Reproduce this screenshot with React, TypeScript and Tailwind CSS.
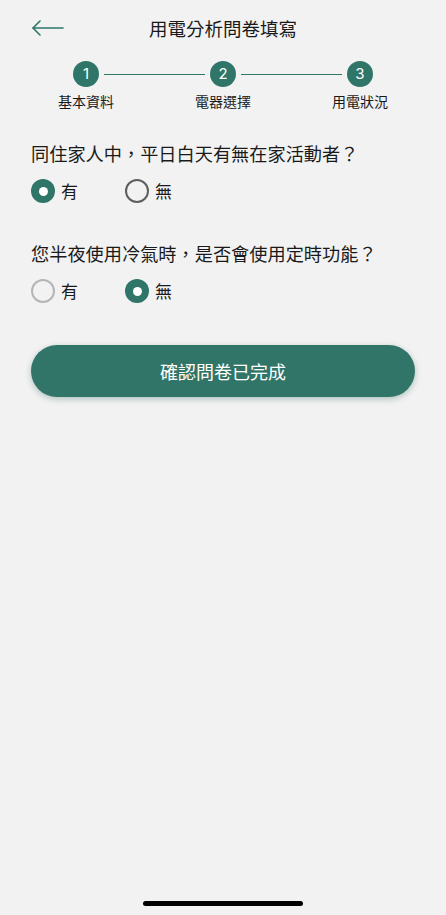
import React from "react";

const font = { fontFamily: '"Noto Sans CJK TC", "Noto Sans", sans-serif' };

function Radio({ checked, ring }: { checked: boolean; ring: string }) {
  if (checked) {
    return (
      <span className="flex h-[24px] w-[24px] items-center justify-center rounded-full bg-[#2f7568]">
        <span className="h-[9px] w-[9px] rounded-full bg-white" />
      </span>
    );
  }
  return <span className={`h-[24px] w-[24px] rounded-full border-2 ${ring}`} />;
}

function Option({ label, checked, ring }: { label: string; checked: boolean; ring: string }) {
  return (
    <div className="flex w-[94px] items-center gap-[6px]">
      <Radio checked={checked} ring={ring} />
      <span className="text-[17px] leading-[24px] text-[#1a1a1a]">{label}</span>
    </div>
  );
}

function Step({ n }: { n: number }) {
  return (
    <div className="flex h-[26px] w-[26px] items-center justify-center rounded-full bg-[#2f7568] text-[15px] text-white" style={{ fontFamily: '"Inter", "Noto Sans", sans-serif' }}>
      {n}
    </div>
  );
}

export default function App() {
  return (
    <div className="flex min-h-[915px] flex-col bg-[#f2f2f2] text-[#1a1a1a]" style={font}>
      <div className="grid h-[56px] grid-cols-[1fr_auto_1fr] items-center">
        <div className="pl-[31px]">
          <svg width="34" height="18" viewBox="0 0 34 18" fill="none" stroke="#2f7568" strokeWidth="1.6" strokeLinecap="round" strokeLinejoin="round">
            <path d="M2 9 H32" />
            <path d="M9 2 L2 9 L9 16" />
          </svg>
        </div>
        <div className="text-[18.5px] font-normal leading-[26px]">用電分析問卷填寫</div>
        <div />
      </div>

      <div className="mt-[5px] flex items-center pl-[73px]">
        <Step n={1} />
        <div className="ml-[5px] h-px w-[101px] bg-[#2f7568]" />
        <div className="ml-[5px]"><Step n={2} /></div>
        <div className="ml-[5px] h-px w-[101px] bg-[#2f7568]" />
        <div className="ml-[5px]"><Step n={3} /></div>
      </div>
      <div className="mt-[4px] flex pl-[46px] text-[14px] leading-[20px]">
        <div className="w-[80px] text-center">基本資料</div>
        <div className="ml-[57px] w-[80px] text-center">電器選擇</div>
        <div className="ml-[57px] w-[80px] text-center">用電狀況</div>
      </div>

      <div className="px-[31px]">
        <div className="mt-[29px] text-[18.2px] leading-[26px]">同住家人中，平日白天有無在家活動者？</div>
        <div className="mt-[13px] flex">
          <Option label="有" checked ring="" />
          <Option label="無" checked={false} ring="border-[#5e5e5e]" />
        </div>

        <div className="mt-[37px] text-[18.2px] leading-[26px]">您半夜使用冷氣時，是否會使用定時功能？</div>
        <div className="mt-[13px] flex">
          <Option label="有" checked={false} ring="border-[#b5b5b5]" />
          <Option label="無" checked ring="" />
        </div>

        <button className="mt-[42px] flex h-[52px] w-[384px] items-center justify-center rounded-full bg-[#317568] text-[18px] text-white shadow-[0_2px_6px_rgba(20,80,70,0.3)]">
          確認問卷已完成
        </button>
      </div>

      <div className="mx-auto mb-[9px] mt-auto h-[5px] w-[160px] rounded-full bg-black" />
    </div>
  );
}
